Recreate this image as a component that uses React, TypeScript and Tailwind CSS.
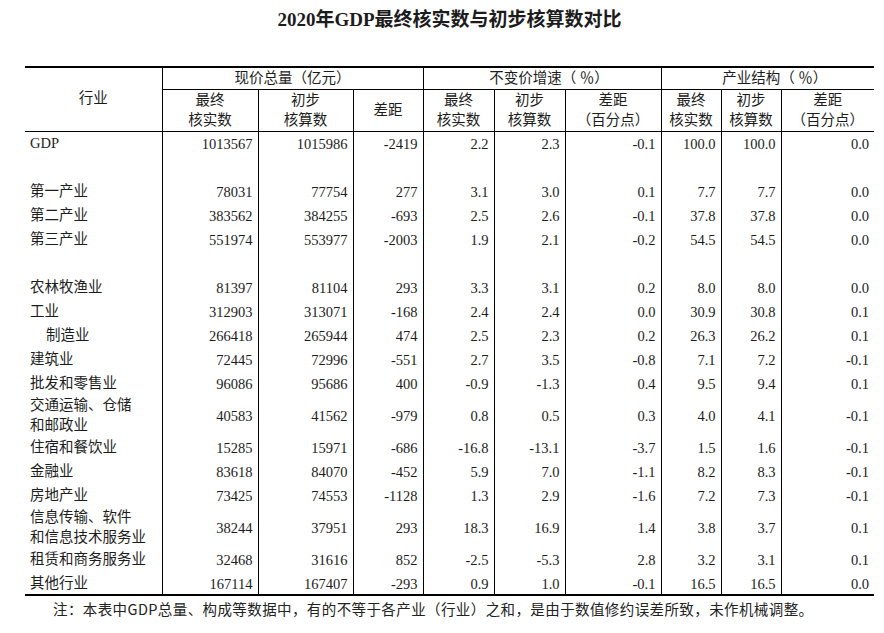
import React from "react";

type Row = { name: string[]; v: string[]; indent?: boolean } | null;

const ROWS: Row[] = [
  { name: ["GDP"], v: ["1013567", "1015986", "-2419", "2.2", "2.3", "-0.1", "100.0", "100.0", "0.0"] },
  null,
  { name: ["第一产业"], v: ["78031", "77754", "277", "3.1", "3.0", "0.1", "7.7", "7.7", "0.0"] },
  { name: ["第二产业"], v: ["383562", "384255", "-693", "2.5", "2.6", "-0.1", "37.8", "37.8", "0.0"] },
  { name: ["第三产业"], v: ["551974", "553977", "-2003", "1.9", "2.1", "-0.2", "54.5", "54.5", "0.0"] },
  null,
  { name: ["农林牧渔业"], v: ["81397", "81104", "293", "3.3", "3.1", "0.2", "8.0", "8.0", "0.0"] },
  { name: ["工业"], v: ["312903", "313071", "-168", "2.4", "2.4", "0.0", "30.9", "30.8", "0.1"] },
  { name: ["制造业"], indent: true, v: ["266418", "265944", "474", "2.5", "2.3", "0.2", "26.3", "26.2", "0.1"] },
  { name: ["建筑业"], v: ["72445", "72996", "-551", "2.7", "3.5", "-0.8", "7.1", "7.2", "-0.1"] },
  { name: ["批发和零售业"], v: ["96086", "95686", "400", "-0.9", "-1.3", "0.4", "9.5", "9.4", "0.1"] },
  { name: ["交通运输、仓储", "和邮政业"], v: ["40583", "41562", "-979", "0.8", "0.5", "0.3", "4.0", "4.1", "-0.1"] },
  { name: ["住宿和餐饮业"], v: ["15285", "15971", "-686", "-16.8", "-13.1", "-3.7", "1.5", "1.6", "-0.1"] },
  { name: ["金融业"], v: ["83618", "84070", "-452", "5.9", "7.0", "-1.1", "8.2", "8.3", "-0.1"] },
  { name: ["房地产业"], v: ["73425", "74553", "-1128", "1.3", "2.9", "-1.6", "7.2", "7.3", "-0.1"] },
  { name: ["信息传输、软件", "和信息技术服务业"], v: ["38244", "37951", "293", "18.3", "16.9", "1.4", "3.8", "3.7", "0.1"] },
  { name: ["租赁和商务服务业"], v: ["32468", "31616", "852", "-2.5", "-5.3", "2.8", "3.2", "3.1", "0.1"] },
  { name: ["其他行业"], v: ["167114", "167407", "-293", "0.9", "1.0", "-0.1", "16.5", "16.5", "0.0"] },
];

// sub header cells under the three groups
const SUB = [
  ["最终", "核实数"],
  ["初步", "核算数"],
  ["差距"],
  ["最终", "核实数"],
  ["初步", "核算数"],
  ["差距", "（百分点）"],
  ["最终", "核实数"],
  ["初步", "核算数"],
  ["差距", "（百分点）"],
];

export default function App() {
  return (
    <div className="min-h-[633px] bg-white text-[#1c1c1c] font-['Liberation_Serif','Noto_Sans_CJK_SC',serif]">
      <div className="ml-[25px] w-[849px] pt-[8px]">
        <h1 className="text-center text-[19px] leading-[24px] font-bold">2020年GDP最终核实数与初步核算数对比</h1>

        <table className="mt-[34px] w-[849px] table-fixed border-collapse border-t-2 border-b-2 border-black text-[14.5px] leading-[20px]">
          <colgroup>
            <col className="w-[137px]" />
            <col className="w-[96px]" />
            <col className="w-[95px]" />
            <col className="w-[70px]" />
            <col className="w-[71px]" />
            <col className="w-[71px]" />
            <col className="w-[96px]" />
            <col className="w-[60px]" />
            <col className="w-[60px]" />
            <col className="w-[93px]" />
          </colgroup>
          <thead>
            <tr className="h-[22px]">
              <th rowSpan={2} className="border-r border-b border-black font-normal text-center align-middle pb-[2px]">
                行业
              </th>
              <th colSpan={3} className="border-r border-b border-black font-normal text-center">
                现价总量（亿元）
              </th>
              <th colSpan={3} className="border-r border-b border-black font-normal text-center pl-[14px]">
                不变价增速（ ％）
              </th>
              <th colSpan={3} className="border-b border-black font-normal text-center pl-[14px]">
                产业结构（ ％）
              </th>
            </tr>
            <tr className="h-[42px]">
              {SUB.map((s, i) => (
                <th
                  key={i}
                  className={`border-b border-black font-normal text-center align-middle ${i < 8 ? "border-r" : ""}`}
                >
                  {s.map((l, j) => (
                    <div key={j}>{l}</div>
                  ))}
                </th>
              ))}
            </tr>
          </thead>
          <tbody>
            {ROWS.map((r, i) =>
              r === null ? (
                <tr key={i} className="h-[24px]">
                  {Array.from({ length: 10 }).map((_, j) => (
                    <td key={j} className={j < 9 ? "border-r border-black" : ""} />
                  ))}
                </tr>
              ) : (
                <tr key={i} className={r.name.length > 1 ? "h-[40px]" : "h-[24px]"}>
                  <td className={`border-r border-black align-middle ${r.indent ? "pl-[21px]" : "pl-[5px]"}`}>
                    {r.name.map((l, j) => (
                      <div key={j} className="whitespace-nowrap">{l}</div>
                    ))}
                  </td>
                  {r.v.map((v, j) => (
                    <td
                      key={j}
                      className={`text-right align-middle pt-[2px] pr-[5px] ${j < 8 ? "border-r border-black" : "pr-[4px]"}`}
                    >
                      {v}
                    </td>
                  ))}
                </tr>
              )
            )}
          </tbody>
        </table>

        <p className="pl-[28px] pt-[3px] text-[14.5px] leading-[20px] tracking-[0.4px] text-[#222] font-['Noto_Sans_CJK_SC','Liberation_Sans',sans-serif]">
          注：本表中GDP总量、构成等数据中，有的不等于各产业（行业）之和，是由于数值修约误差所致，未作机械调整。
        </p>
      </div>
    </div>
  );
}
